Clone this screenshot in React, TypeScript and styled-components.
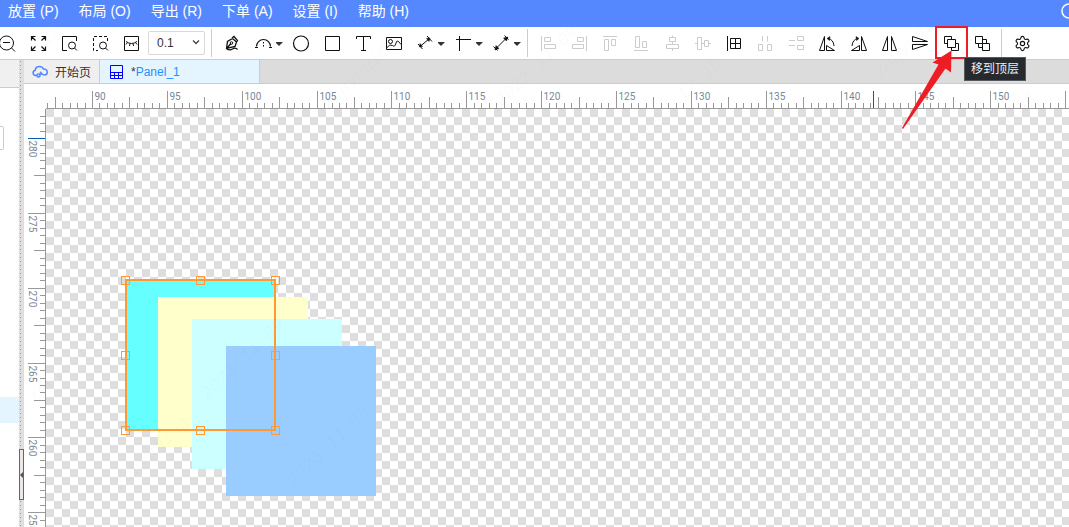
import React, { useEffect, useState } from "react";
import styled, { createGlobalStyle, css } from "styled-components";
import { Settings } from "lucide-react";

const GlobalStyle = createGlobalStyle`
  *, *::before, *::after { box-sizing: border-box; }
  html, body { margin: 0; height: 100%; }
  #root { height: 100%; }
  body { font-family: "Liberation Sans", "Noto Sans CJK SC", sans-serif; font-size: 12px; color: #333; overflow: hidden; }
  button, select { font: inherit; color: inherit; }
`;

const Shell = styled.div`
  position: relative;
  display: flex;
  flex-direction: column;
  height: 100%;
  overflow: hidden;
  background: #fff;
`;

const MenuBar = styled.nav`
  display: flex;
  align-items: center;
  gap: 20px;
  flex: none;
  height: 27px;
  padding: 0 0 5px 8px;
  background: #5588ff;
  color: #fff;
`;

const MenuButton = styled.button`
  flex: none;
  padding: 0;
  border: 0;
  background: none;
  font-size: 14px;
  line-height: 20px;
  white-space: nowrap;
`;

const HelpButton = styled.button`
  display: flex;
  margin: 0 -8px 0 auto;
  padding: 0;
  border: 0;
  background: none;
`;

const ToolBar = styled.div`
  display: flex;
  align-items: center;
  flex: none;
  height: 33px;
  margin-left: -8px;
  border-bottom: 1px solid #ccc;
  background: #fff;
`;

const ToolButton = styled.button<{ $split?: boolean; $muted?: boolean }>`
  position: relative;
  display: flex;
  align-items: center;
  flex: none;
  gap: 4px;
  width: ${(p) => (p.$split ? 38 : 31)}px;
  height: 32px;
  padding: 0 0 0 7px;
  border: 0;
  background: none;
  color: ${(p) => (p.$muted ? "#ccc" : "#111")};
`;

const Glyph = styled.svg`
  display: block;
  flex: none;
  fill: none;
  stroke: currentColor;
  overflow: visible;
`;

const Divider = styled.span`
  flex: none;
  width: 1px;
  height: 28px;
  margin: 0 5px 0 3px;
  background: #ccc;
`;

const GridSize = styled.div`
  position: relative;
  flex: none;
  width: 57px;
  height: 24px;
  margin: 0 3px 0 1px;
  svg { position: absolute; right: 5px; top: 9px; pointer-events: none; }
`;

const GridSelect = styled.select`
  appearance: none;
  width: 100%;
  height: 100%;
  padding: 0 0 0 8px;
  border: 1px solid #d9d9d9;
  border-radius: 2px;
  background: #fff;
  font-size: 12px;
`;

const Highlight = styled.span`
  position: absolute;
  inset: -1px -1px 0 -1px;
  border: 2px solid #ee1c24;
`;

const Pointer = styled.svg`
  position: absolute;
  z-index: 3;
  top: 23px;
  left: -34px;
  pointer-events: none;
`;

const Tooltip = styled.span`
  position: absolute;
  z-index: 2;
  top: 30px;
  left: 28px;
  padding: 0 6px;
  border: 1px solid #55585c;
  background: #26292e;
  color: #eee;
  font-size: 12px;
  line-height: 22px;
  white-space: nowrap;
`;

const Body = styled.div`
  display: flex;
  flex: 1;
  min-height: 0;
`;

const SidePanel = styled.aside`
  display: flex;
  flex-direction: column;
  flex: none;
  width: 19px;
  overflow: hidden;
`;

const PanelHead = styled.div`
  flex: none;
  height: 28px;
  border-bottom: 1px solid #ccc;
  background: #f0f0f0;
`;

const PanelField = styled.div`
  flex: none;
  width: 4px;
  height: 24px;
  margin-top: 38px;
  border: 1px solid #ccc;
  border-left: 0;
  border-radius: 0 2px 2px 0;
`;

const PanelRow = styled.div`
  flex: none;
  height: 26px;
  margin-top: 247px;
  background: #e5f5ff;
`;

const Splitter = styled.div`
  display: flex;
  flex-direction: column;
  flex: none;
  width: 5px;
  padding-top: 389px;
  background: linear-gradient(#999 1px, transparent 1px) 1px 1px / 1px 4px repeat-y #dedede;
`;

const Collapse = styled.button`
  display: flex;
  align-items: center;
  flex: none;
  width: 5px;
  height: 51px;
  padding: 0;
  border: 1px solid #6b6366;
  background: #ece8ea;
`;

const Workspace = styled.main`
  display: flex;
  flex-direction: column;
  flex: 1;
  min-width: 0;
`;

const TabBar = styled.div`
  display: flex;
  flex: none;
  height: 24px;
  border-bottom: 1px solid #ccc;
  background: #dcdcdc;
`;

const Tab = styled.button<{ $active?: boolean }>`
  display: flex;
  align-items: center;
  flex: none;
  gap: 7px;
  padding: 0 8px;
  border: 0;
  border-right: 1px solid #ccc;
  background: #efefef;
  white-space: nowrap;
  ${(p) =>
    p.$active &&
    css`
      width: 160px;
      padding: 0 10px;
      background: #e5f5ff;
    `}
`;

const TabName = styled.span`
  color: #1e90ff;
`;

const TopRuler = styled.svg`
  display: block;
  flex: none;
  width: 100%;
  height: 25px;
`;

const Stage = styled.div`
  display: flex;
  flex: 1;
  min-height: 0;
`;

const SideRuler = styled.svg`
  display: block;
  flex: none;
  width: 22px;
  height: 100%;
`;

const Board = styled.svg`
  display: block;
  flex: 1;
  min-width: 0;
  height: 100%;
  background: conic-gradient(#fff 25%, #dedede 0 50%, #fff 0 75%, #dedede 0) 0 0 / 16px 16px;
`;

const RulerLabel = styled.text`
  fill: #778899;
  font-family: Roboto, sans-serif;
  font-size: 10px;
`;

const Watermark = styled.svg`
  position: absolute;
  inset: 0;
  z-index: 4;
  width: 100%;
  height: 100%;
  pointer-events: none;
  text {
    fill: #808080;
    fill-opacity: 0.04;
    font: italic 18px "Liberation Mono", monospace;
    text-anchor: middle;
  }
`;

const menus = ["放置 (P)", "布局 (O)", "导出 (R)", "下单 (A)", "设置 (I)", "帮助 (H)"];

type Tool = { name: string; art: React.ReactNode; split?: boolean; muted?: boolean; marked?: boolean };

const viewTools: Tool[] = [
  { name: "缩小", art: <><circle cx="7.5" cy="8" r="7" /><path d="M4 7.5h7M12.5 13l3.5 3.5" /></> },
  { name: "适应窗口", art: <path strokeWidth="1.2" d="M1.5 5.5v-4h4M11.5 1.5h4v4M15.5 11.5v4h-4M5.5 15.5h-4v-4M1.5 1.5l4 4M15.5 1.5l-4 4M15.5 15.5l-4-4M1.5 15.5l4-4" /> },
  { name: "查看页面", art: <><path d="M15.5 6V1.5h-14v14H6" /><circle cx="11" cy="10.5" r="3.5" /><path d="M13.5 13l2.5 2.5" /></> },
  { name: "框选缩放", art: <><path d="M15.5 6V1.5h-14v14H6" strokeDasharray="3 2" /><circle cx="11" cy="10.5" r="3.5" /><path d="M13.5 13l2.5 2.5" /></> },
  { name: "隐藏", art: <><path d="M1.5 1.5h14v14h-14z" /><path d="M3 6.5q5.5 4 11 0M4.5 7.5l-1.5 2M7 8.5l-.5 2.500M10 8.5l.5 2.5M12.5 7.5l1.5 2" /></> },
];

const drawTools: Tool[] = [
  { name: "钢笔", art: <><path strokeWidth="1.3" d="M2.5 13.5L3.5 6.5 8.5 3.5l4 3.5-1.5 4.5zM8 3l2-1.5 3.5 4-1 1.5M3 13l4-4.5M2.5 13.5q3 2.5 6 .5t5 .5" /><circle cx="7.5" cy="8" r="1.3" /></> },
  { name: "圆弧", split: true, art: <><path strokeWidth="1.2" d="M1.5 11.5a7 7 0 0 1 14 0" /><path d="M0 12.5h3M14 12.5h3M8.5 7v1.5M8.5 10v1.5" /></> },
  { name: "圆形", art: <circle cx="8" cy="8.5" r="7.5" strokeWidth="1.2" /> },
  { name: "矩形", art: <path d="M1.5 1.5h14v14h-14z" /> },
  { name: "文本", art: <path d="M1.5 4V1.5h14V4M8.5 1.5v14M6 15.5h5" /> },
  { name: "图片", art: <><path d="M.5 2.5h15v12H.5z" /><circle cx="4.5" cy="6.5" r="2" /><path d="M1 12.5q3-4 5.5-2t3.5-2.5 5 1.5" /></> },
  { name: "标注", split: true, art: <><path d="M3 11.500L12.500 3.500M1 9l4.500 5M10 1l5 5.500" /><path fill="currentColor" strokeWidth=".5" d="M2.500 12l.5-3.500 2.500 3zM13 3l-3.500.5 2.500 3z" /></> },
  { name: "直角", split: true, art: <path d="M1 4.5h15M4.5 1v15" /> },
  { name: "测量", split: true, art: <><path d="M2 14.5L14.5 2M.5 11.500l4 4M11.500 .5l4 4" /><path fill="currentColor" strokeWidth=".5" d="M2 15l1-4.500 3 3zM15 2l-4.500 1 3 3z" /></> },
];

const arrangeTools: Tool[] = [
  { name: "左对齐", muted: true, art: <path d="M1.5 1v15M4.5 2.5h6v4h-6zM4.5 9.5h11v4h-11z" /> },
  { name: "右对齐", muted: true, art: <path d="M15.5 1v15M6.5 2.5h6v4h-6zM1.5 9.5h11v4h-11z" /> },
  { name: "顶部对齐", muted: true, art: <path d="M1 1.5h14M2.5 4.5h4v11h-4zM9.5 4.5h4v6h-4z" /> },
  { name: "底部对齐", muted: true, art: <path d="M1 15.5h14M2.5 1.5h4v11h-4zM9.5 6.5h4v6h-4z" /> },
  { name: "水平居中", muted: true, art: <path d="M5.5 2.5h6v4h-6zM2.5 9.5h12v4h-12zM8.5 .5v2M8.5 6.5v3M8.5 13.5v2.5" /> },
  { name: "垂直居中", muted: true, art: <path d="M2.5 2.5h4v12h-4zM9.5 5.5h4v6h-4zM0 8.5h2.5M6.5 8.5h3M13.5 8.5h2.5" /> },
  { name: "对齐网格", art: <path d="M1.5 1v15M4.5 3.5h10v10h-10zM9.5 3.5v10M4.5 8.5h10" /> },
  { name: "水平分布", muted: true, art: <path d="M5.5 1v5.5M10.5 1v5.5M1.5 9.5h4v6h-4zM10.5 9.5h4v6h-4z" /> },
  { name: "垂直分布", muted: true, art: <path d="M1 5.5h6M1 10.5h6M9.5 1.5h6v4h-6zM9.5 10.5h6v4h-6z" /> },
  { name: "左旋转", art: <><path d="M5.5 1.5v14h-5zM7.5 10.5v5h8zM9 3.5q5.5 1 6 7.5" /><path fill="currentColor" strokeWidth=".5" d="M8 3.5l3-2-.5 4z" /></> },
  { name: "右旋转", art: <><path d="M11.5 1.5v14h5zM9.5 10.5v5h-8zM8 3.5q-5.5 1-6 7.5" /><path fill="currentColor" strokeWidth=".5" d="M9 3.5l-3-2 .5 4z" /></> },
  { name: "水平翻转", art: <path d="M6.5 1.5v14h-5zM10.5 1.5v14h5z" /> },
  { name: "垂直翻转", art: <path d="M.5 1.5v5h15zM.5 14.5v-5h15z" /> },
  { name: "移到顶层", marked: true, art: <path d="M4.5 4.5h8v8h-8zM4.5 8.5h-3v-7h7v3M12.5 8.5h3v7h-7v-3" /> },
  { name: "移到底层", art: <path d="M1.5 1.5h7v7h-7zM8.5 8.5h7v7h-7zM8.5 4.5h4v4M4.5 8.5v4h4" /> },
];

function ToolItem({ tool }: { tool: Tool }) {
  return (
    <ToolButton aria-label={tool.name} $split={tool.split} $muted={tool.muted}>
      <Glyph width="17" height="16" viewBox="0 0 17 16">{tool.art}</Glyph>
      {tool.split && (
        <svg width="8" height="6" viewBox="0 0 8 6"><path d="M-1 2h8L3 6z" fill="#333" overflow="visible" /></svg>
      )}
      {tool.marked && (
        <>
          <Highlight />
          <Pointer width="52" height="80" viewBox="0 0 52 80">
            <path fill="#ee1c24" d="M49.5 .5L30.5 12.5l6 2L0 78l1 1L43.5 18.500l5.500 4z" />
          </Pointer>
          <Tooltip role="tooltip">{tool.name}</Tooltip>
        </>
      )}
    </ToolButton>
  );
}

const STEP = 7.485;
const tickIndexes = (from: number, to: number) => Array.from({ length: Math.max(0, to - from) }, (_, i) => i + from);
const reach = (i: number) => (i % 10 === 0 ? 17 : i % 5 === 0 ? 11 : 5);

function useWindowSize() {
  const [size, setSize] = useState({ width: window.innerWidth, height: window.innerHeight });
  useEffect(() => {
    const update = () => setSize({ width: window.innerWidth, height: window.innerHeight });
    window.addEventListener("resize", update);
    return () => window.removeEventListener("resize", update);
  }, []);
  return size;
}

function HorizontalRuler({ length }: { length: number }) {
  return (
    <TopRuler aria-label="水平标尺">
      {tickIndexes(-6, Math.ceil((length - 68) / STEP)).map((i) => {
        const x = Math.round(68 + i * STEP) + 0.5;
        return (
          <g key={i}>
            <path d={`M${x} 24v${-reach(i)}`} stroke="#999" />
            {i % 10 === 0 && x + 20 < length && <RulerLabel x={x + 2} y={16}>{90 + i / 2}</RulerLabel>}
          </g>
        );
      })}
      <path d="M849.5 24V7" stroke="#0060b8" />
      <rect x="22" y="24" width="100%" height="1" fill="#999" />
    </TopRuler>
  );
}

function VerticalRuler({ length }: { length: number }) {
  return (
    <SideRuler aria-label="垂直标尺">
      {tickIndexes(-3, Math.ceil((length - 29) / STEP)).map((i) => {
        const y = Math.round(29 + i * STEP) + 0.5;
        return (
          <g key={i}>
            <path d={`M21 ${y}h${-reach(i)}`} stroke={i === 0 ? "#0060b8" : "#999"} />
            {i % 10 === 0 && (
              <RulerLabel transform={`translate(5 ${y + 2}) rotate(90)`}>{280 - i / 2}</RulerLabel>
            )}
          </g>
        );
      })}
      <rect x="21" y="0" width="1" height="100%" fill="#999" />
    </SideRuler>
  );
}

const shapes = [
  { x: 80, y: 171, fill: "#66ffff" },
  { x: 112, y: 188, fill: "#ffffcc" },
  { x: 146, y: 210, fill: "#ccffff" },
  { x: 180, y: 237, fill: "#99ccff" },
];

function DesignBoard() {
  return (
    <Board role="img" aria-label="画布">
      {shapes.map((s) => (
        <rect key={s.fill} x={s.x} y={s.y} width="150" height="150" fill={s.fill} />
      ))}
      <g fill="none" stroke="#ff9933">
        <rect x="80" y="171" width="149" height="150" strokeWidth="2" />
        {[171.5, 246.5, 321.5].map((cy) =>
          [79.5, 154.5, 229.5]
            .filter((cx) => !(cx === 154.5 && cy === 246.5))
            .map((cx) => <rect key={`${cx}-${cy}`} x={cx - 4} y={cy - 4} width="8" height="8" />)
        )}
      </g>
    </Board>
  );
}

const marks = [
  { text: "zouyuqing", x: 449, y: 164 },
  { text: "2023-11-09", x: 626, y: 157 },
  { text: "17:15", x: 789, y: 170 },
];

function WatermarkLayer({ width, height }: { width: number; height: number }) {
  return (
    <Watermark aria-hidden="true">
      {[-2, -1, 0, 1].flatMap((col) =>
        tickIndexes(-5, 8).flatMap((row) =>
          marks.map((m) => {
            const x = m.x + col * 552 + row * 86;
            const y = m.y - col * 32 + row * 87;
            return x > 0 && x < width && y > 0 && y < height ? (
              <text key={`${m.text}${col}${row}`} transform={`translate(${x} ${y}) rotate(-44)`}>{m.text}</text>
            ) : null;
          })
        )
      )}
    </Watermark>
  );
}

export default function App() {
  const { width, height } = useWindowSize();
  return (
    <Shell>
      <GlobalStyle />
      <MenuBar>
        {menus.map((m) => <MenuButton key={m}>{m}</MenuButton>)}
        <HelpButton aria-label="搜索">
          <Glyph width="16" height="16" viewBox="0 0 16 16"><circle cx="8" cy="8" r="7" strokeWidth="1.5" /></Glyph>
        </HelpButton>
      </MenuBar>

      <ToolBar role="toolbar">
        {viewTools.map((t) => <ToolItem key={t.name} tool={t} />)}
        <GridSize>
          <GridSelect aria-label="网格尺寸" defaultValue="0.1">
            <option>0.1</option>
            <option>0.5</option>
            <option>1</option>
          </GridSelect>
          <Glyph width="8" height="5" viewBox="0 0 8 5"><path d="M1 .5l3 3 3-3" stroke="#444" strokeWidth="1.3" /></Glyph>
        </GridSize>
        <Divider />
        {drawTools.map((t) => <ToolItem key={t.name} tool={t} />)}
        <Divider />
        {arrangeTools.map((t) => <ToolItem key={t.name} tool={t} />)}
        <Divider />
        <ToolButton aria-label="设置"><Settings size={17} strokeWidth={1.6} /></ToolButton>
      </ToolBar>

      <Body>
        <SidePanel>
          <PanelHead />
          <PanelField />
          <PanelRow />
        </SidePanel>
        <Splitter>
          <Collapse aria-label="收起面板">
            <svg width="3" height="6" viewBox="0 0 3 6"><path d="M3 0v6L0 3z" fill="#5a5054" /></svg>
          </Collapse>
        </Splitter>
        <Workspace>
          <TabBar>
            <Tab>
              <Glyph width="16" height="14" viewBox="0 0 16 14">
                <g stroke="#5588ff" strokeWidth="1.6">
                  <path d="M5 10.5H3.5a2.7 2.7 0 0 1-.3-5.3C3.5 2.8 5.5 1.5 7.5 1.5c2 0 3.3 1 4 2.5 2.2 0 3.7 1.3 3.7 3.2 0 1.7-1.2 2.8-2.7 2.8-2 0-2.5-1.5-4.5-3" />
                  <circle cx="6.5" cy="10.5" r="1.5" />
                  <path d="M8 9.5l2-1" />
                </g>
              </Glyph>
              <span>开始页</span>
            </Tab>
            <Tab $active>
              <Glyph width="14" height="16" viewBox="0 0 14 16">
                <path stroke="#0000ff" d="M.5 1.5h12v13H.5zM.5 8.5h12M.5 11.5h12M4.5 8.5v6M8.5 8.5v6" />
              </Glyph>
              <span>*<TabName>Panel_1</TabName></span>
            </Tab>
          </TabBar>
          <HorizontalRuler length={width - 24} />
          <Stage>
            <VerticalRuler length={height - 109} />
            <DesignBoard />
          </Stage>
        </Workspace>
      </Body>
      <WatermarkLayer width={width} height={height} />
    </Shell>
  );
}
